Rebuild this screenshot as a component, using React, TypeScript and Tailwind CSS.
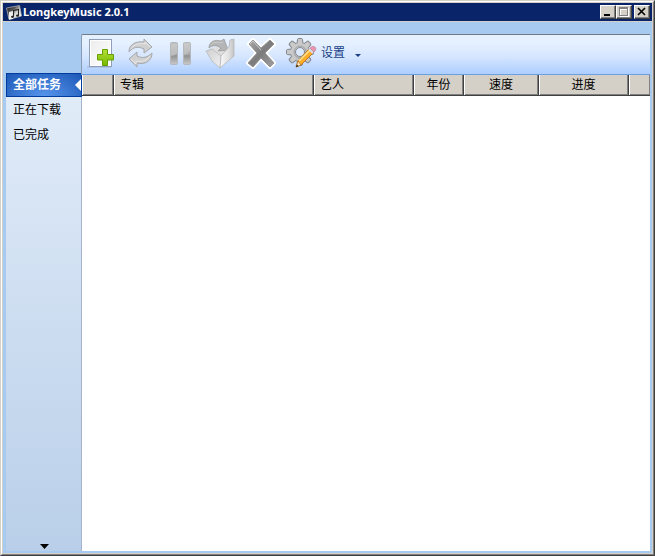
import type { ReactNode } from 'react';
import clsx from 'clsx';

const tasks = ['全部任务', '正在下载', '已完成'];

const columns = [
  { label: '', width: 'w-8', align: 'text-left' },
  { label: '专辑', width: 'w-[200px]', align: 'text-left' },
  { label: '艺人', width: 'w-[100px]', align: 'text-left' },
  { label: '年份', width: 'w-[50px]', align: 'text-center' },
  { label: '速度', width: 'w-[75px]', align: 'text-center' },
  { label: '进度', width: 'w-[90px]', align: 'text-center' },
  { label: '', width: '', align: 'text-left' },
];

const gearTeeth = [0, 45, 90, 135, 180, 225, 270, 315];

function AppIcon() {
  return (
    <svg width="16" height="16" viewBox="0 0 16 16" aria-hidden="true">
      <defs>
        <linearGradient id="app" x1="0" y1="0" x2="1" y2="1">
          <stop offset="0" stopColor="#111" />
          <stop offset="0.35" stopColor="#555" />
          <stop offset="0.6" stopColor="#ddd" />
          <stop offset="1" stopColor="#fff" />
        </linearGradient>
      </defs>
      <path d="M.5 4 13.500 1.500 15.500 12 3 15.500Z" fill="url(#app)" stroke="#bbb" strokeWidth="0.7" />
      <path d="M3 8 7 7v8l-4 .5Z" fill="#eee" />
      <path d="M7.500 12.500V6.500l5-1v6" fill="none" stroke="#222" strokeWidth="1.1" />
      <ellipse cx="6.500" cy="12.800" rx="1.500" ry="1.100" fill="#222" />
      <ellipse cx="11.500" cy="11.700" rx="1.500" ry="1.100" fill="#222" />
    </svg>
  );
}

function AddIcon() {
  return (
    <svg width="32" height="32" viewBox="0 0 32 32" aria-hidden="true">
      <defs>
        <linearGradient id="plus" x1="0" y1="0" x2="0" y2="1">
          <stop offset="0" stopColor="#b5df36" />
          <stop offset="1" stopColor="#77b900" />
        </linearGradient>
        <linearGradient id="page" x1="0" y1="0" x2="1" y2="1">
          <stop offset="0" stopColor="#ededed" />
          <stop offset="1" stopColor="#fff" />
        </linearGradient>
      </defs>
      <path d="M3 30h24" stroke="#9cabc4" strokeWidth="1.5" opacity="0.5" />
      <rect x="5.500" y="2.500" width="22" height="27" fill="#fff" stroke="#8f9db8" />
      <rect x="7" y="4" width="19" height="24" fill="url(#page)" />
      <path
        d="M18.500 12.500h5v5h6v5.500h-6v5.500h-5v-5.500h-5v-5.500h5z"
        fill="url(#plus)"
        stroke="#62a000"
        strokeLinejoin="round"
      />
    </svg>
  );
}

function RefreshIcon() {
  return (
    <svg width="32" height="32" viewBox="0 0 32 32" aria-hidden="true">
      <g fill="#d0d0d0" stroke="#a4a7ac" strokeLinejoin="round">
        <path d="M5 15C5 7 12 4 20 5V2l8 8-8 6v-4C14 9 9 10 5 15Z" />
        <path d="M28 16c0 8-7 12-15 10v4l-8-8 8-7v4c6 3 11 1 15-3Z" />
      </g>
      <path d="M7 12c3-5 9-6 14-5V5l5 5M26 19c-3 5-9 6-14 5v3l-5-5" fill="none" stroke="#e6e6e6" />
    </svg>
  );
}

function PauseIcon() {
  return (
    <svg width="32" height="32" viewBox="0 0 32 32" aria-hidden="true">
      <defs>
        <linearGradient id="pause" x1="0" y1="0" x2="0" y2="1">
          <stop offset="0" stopColor="#c1c1c1" />
          <stop offset="0.55" stopColor="#a8a8a8" />
          <stop offset="0.6" stopColor="#929292" />
          <stop offset="1" stopColor="#c9c9c9" />
        </linearGradient>
      </defs>
      <g fill="url(#pause)" stroke="#b5b8bc">
        <rect x="6.500" y="5.500" width="7" height="22" rx="1" />
        <rect x="19.500" y="5.500" width="7" height="22" rx="1" />
      </g>
      <path d="M7 19c3 0 4-1 6-3v-9H7zM20 18c3-1 4-2 6-4V6h-6z" fill="#d5d5d5" opacity="0.45" />
    </svg>
  );
}

function FolderIcon() {
  return (
    <svg width="32" height="32" viewBox="0 0 32 32" aria-hidden="true">
      <defs>
        <linearGradient id="folderLeft" x1="0" y1="0" x2="1" y2="1">
          <stop offset="0" stopColor="#cfcfcf" />
          <stop offset="1" stopColor="#f0f0f0" />
        </linearGradient>
        <linearGradient id="folderRight" x1="0" y1="0" x2="1" y2="0">
          <stop offset="0" stopColor="#f8f8f8" />
          <stop offset="0.6" stopColor="#e2e2e2" />
          <stop offset="1" stopColor="#c4c4c4" />
        </linearGradient>
      </defs>
      <path d="M6 11 20 9l4 3-7 8-9-6Z" fill="#dedede" />
      <path
        d="M5 11C5 5 10 2 17 4l3-2 4 11-10 1 3-3C13 8 8 8 5 11Z"
        fill="#b5b5b5"
        stroke="#9b9b9b"
        strokeWidth="0.8"
        strokeLinejoin="round"
      />
      <path d="M7 8C9 5 12 5 17 6l2-1" fill="none" stroke="#cdcdcd" />
      <path
        d="M2 14 8 12l9 7-1 12-8-7Z"
        fill="url(#folderLeft)"
        stroke="#b6b9bd"
        strokeWidth="0.8"
        strokeLinejoin="round"
      />
      <path
        d="M17 19 25 10l1-7 4-1v17L16 31Z"
        fill="url(#folderRight)"
        stroke="#b4b6ba"
        strokeWidth="0.8"
        strokeLinejoin="round"
      />
    </svg>
  );
}

function DeleteIcon() {
  const shape = 'm5 7 4-4 8 8 9-8 4 4-9 9 9 10-4 4-9-9-8 9-5-4 9-10Z';
  return (
    <svg width="32" height="32" viewBox="0 0 32 32" aria-hidden="true">
      <defs>
        <linearGradient id="cross" x1="0" y1="0" x2="1" y2="1">
          <stop offset="0" stopColor="#aaa" />
          <stop offset="0.5" stopColor="#7c7c7c" />
          <stop offset="1" stopColor="#a0a0a0" />
        </linearGradient>
      </defs>
      <path
        d={shape}
        fill="url(#cross)"
        stroke="#fff"
        strokeWidth="4"
        strokeLinejoin="round"
        paintOrder="stroke"
      />
      <path d={shape} fill="none" stroke="#8a8a8a" strokeWidth="0.8" />
      <path d="m6 7 3-3 8 9" fill="none" stroke="#ccc" />
    </svg>
  );
}

function SettingsIcon() {
  return (
    <svg width="33" height="32" viewBox="0 0 33 32" aria-hidden="true">
      <defs>
        <linearGradient id="gear" x1="0" y1="0" x2="1" y2="1">
          <stop offset="0" stopColor="#d4d4d4" />
          <stop offset="1" stopColor="#b0b0b0" />
        </linearGradient>
      </defs>
      <g fill="#c8c8c8" stroke="#808388">
        {gearTeeth.map((angle) => (
          <path
            key={angle}
            d="M13 7l.5-4.500q.2-1 1-1h3q.8 0 1 1L19 7"
            transform={`rotate(${angle} 16 15)`}
          />
        ))}
      </g>
      <circle cx="16" cy="15" r="9.500" fill="url(#gear)" stroke="#808388" strokeWidth="0.7" />
      <g fill="#cacaca">
        {gearTeeth.map((angle) => (
          <path key={angle} d="M13.500 8l.5-4h4l.5 4Z" transform={`rotate(${angle} 16 15)`} />
        ))}
      </g>
      <circle cx="16" cy="15" r="6" fill="none" stroke="#a0a3a8" />
      <circle cx="16" cy="15" r="4.500" fill="#dce9fd" stroke="#84878c" />
      <path d="m12 30 2-6L25 12l4 4L17 28Z" fill="#fdac2c" stroke="#b96b0a" strokeWidth="0.8" strokeLinejoin="round" />
      <path d="m15 24 11-11" stroke="#ffe38b" strokeWidth="1.600" />
      <path d="m12 30 2-6 3 4Z" fill="#ffe5bc" stroke="#9b611b" strokeWidth="0.6" />
      <path d="m12 30 .9-2.500 1.700 1.700Z" fill="#222" />
      <path d="m26 11 2-1.500q2-.5 3.500 1 1 1.500-.5 3.500l-1 1Z" fill="#ee92ae" stroke="#b8899c" strokeWidth="0.7" />
      <path d="m25 12 4 4" stroke="#dcdce8" strokeWidth="1.800" />
    </svg>
  );
}

function CaptionButton({ label, children }: { label: string; children: ReactNode }) {
  return (
    <button
      aria-label={label}
      className="flex h-3.5 w-4 items-center justify-center border border-t-white border-r-[#404040] border-b-[#404040] border-l-white bg-[#d4d0c8] shadow-[inset_-1px_-1px_#808080]"
    >
      {children}
    </button>
  );
}

function TitleBar() {
  return (
    <header className="flex h-[18px] items-center bg-[#0a246a] pr-0.5 pl-[3px]">
      <AppIcon />
      <h1 className="ml-px flex-1 font-['Noto_Sans'] text-[11px] leading-4 font-bold text-white">
        LongkeyMusic 2.0.1
      </h1>
      <CaptionButton label="最小化">
        <svg width="12" height="10" viewBox="0 0 12 10" aria-hidden="true">
          <path d="M2 7h6v2H2z" />
        </svg>
      </CaptionButton>
      <CaptionButton label="最大化">
        <svg width="12" height="10" viewBox="0 0 12 10" shapeRendering="crispEdges" aria-hidden="true">
          <path d="M2.500 1.500h8v8h-8zM3 2.500h7" fill="none" stroke="#fff" />
          <path d="M1.500.5h8v8h-8zM2 1.500h7" fill="none" stroke="#808080" />
        </svg>
      </CaptionButton>
      <span className="w-0.5" />
      <CaptionButton label="关闭">
        <svg width="12" height="10" viewBox="0 0 12 10" aria-hidden="true">
          <path d="m2 1 7 7M9 1 2 8" stroke="#000" strokeWidth="1.600" />
        </svg>
      </CaptionButton>
    </header>
  );
}

function Sidebar() {
  return (
    <aside className="flex w-[76px] shrink-0 flex-col pt-[51px]">
      <nav className="flex flex-1 flex-col border-r border-[#a5b4cc] bg-linear-to-b from-[#e3edf9] to-[#b9cfe9]">
        {tasks.map((task, i) => (
          <button
            key={task}
            className={clsx(
              'flex items-center text-left',
              i === 0
                ? '-mr-px h-6 justify-between border border-[#003c9d] bg-[radial-gradient(ellipse_at_50%_100%,#5795ec,#1c58b7)] pl-1.5 font-bold text-white'
                : 'h-[25px] pl-[7px] text-black'
            )}
          >
            {task}
            {i === 0 && (
              <svg width="6" height="12" viewBox="0 0 6 12" aria-hidden="true">
                <path d="M6 0v12L0 6Z" fill="#fff" />
              </svg>
            )}
          </button>
        ))}
        <button aria-label="更多" className="mt-auto flex h-[7px] justify-center pl-0.5">
          <svg width="9" height="5" viewBox="0 0 9 5" aria-hidden="true">
            <path d="M0 0h9L4.500 5Z" />
          </svg>
        </button>
      </nav>
    </aside>
  );
}

function Toolbar() {
  return (
    <div
      role="toolbar"
      className="-ml-px flex h-[41px] items-center gap-2 rounded-tl-xs border-t border-b border-l border-t-[#737b86] border-b-[#6c9fe0] border-l-[#8c9aaf] bg-linear-to-b from-[#e6f1ff] from-20% via-[#d6e6ff] via-55% to-[#adceff] pb-[3px] pl-0.5"
    >
      <button aria-label="新建"><AddIcon /></button>
      <button aria-label="刷新"><RefreshIcon /></button>
      <button aria-label="暂停"><PauseIcon /></button>
      <button aria-label="打开文件夹"><FolderIcon /></button>
      <button aria-label="删除"><DeleteIcon /></button>
      <button className="flex items-center text-[#173f86]">
        <SettingsIcon />
        <span className="ml-1">设置</span>
        <svg className="mt-1 ml-2.5" width="6" height="3" viewBox="0 0 6 3" aria-hidden="true">
          <path d="M0 0h6L3 3Z" fill="currentColor" />
        </svg>
      </button>
    </div>
  );
}

function TaskTable() {
  return (
    <div className="flex-1 bg-white">
      <table className="w-full table-fixed border-separate border-spacing-0 bg-[#d4d0c8]">
        <thead>
          <tr>
            {columns.map((col, i) => (
              <th
                key={i}
                scope="col"
                className={clsx(
                  'h-[21px] border-r border-b border-[#404040] p-0 px-1.5 leading-[18px] font-normal shadow-[inset_1px_0_#fff,inset_-1px_-1px_#808080] last:border-r-0',
                  col.width,
                  col.align
                )}
              >
                {col.label}
              </th>
            ))}
          </tr>
        </thead>
      </table>
    </div>
  );
}

export default function App() {
  return (
    <div className="flex min-h-screen border border-t-[#d4d0c8] border-r-[#404040] border-b-[#404040] border-l-[#d4d0c8] font-['Liberation_Sans','Noto_Sans_CJK_SC',sans-serif] text-xs text-black">
      <div className="flex flex-1 border border-t-white border-r-[#808080] border-b-[#808080] border-l-white">
        <div className="flex flex-1 flex-col border border-[#d4d0c8] bg-[#a6caf0]">
          <TitleBar />
          <div className="flex flex-1 border-t border-[#d4d0c8] pr-0.5 pb-0.5 pl-[3px]">
            <Sidebar />
            <main className="flex min-w-0 flex-1 flex-col pt-3">
              <Toolbar />
              <TaskTable />
            </main>
          </div>
        </div>
      </div>
    </div>
  );
}
